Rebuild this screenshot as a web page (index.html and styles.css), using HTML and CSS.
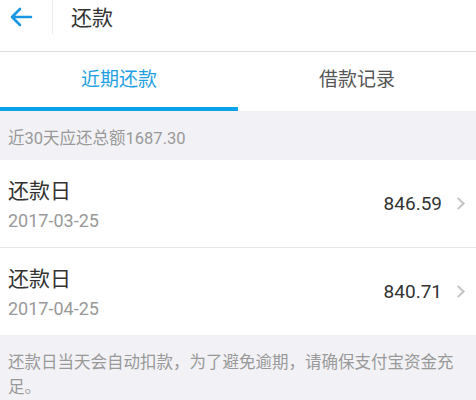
FILE: index.html
```
<!DOCTYPE html>
<html lang="zh-CN">
<head>
    <meta charset="UTF-8">
    <meta name="viewport" content="width=device-width, initial-scale=1.0">
    <title>还款</title>
    <link rel="stylesheet" href="styles.css">
</head>
<body>
    <div class="header">
        <div class="back">
            <svg width="24" height="20" viewBox="0 0 24 20">
                <path d="M22 10 H3 M11 2 L3 10 L11 18" fill="none" stroke="#1a96e2" stroke-width="2.6" stroke-linecap="round" stroke-linejoin="round"/>
            </svg>
        </div>
        <div class="title">还款</div>
    </div>
    <div class="tabs">
        <div class="tab active">近期还款</div>
        <div class="tab">借款记录</div>
    </div>
    <div class="summary">近30天应还总额1687.30</div>
    <div class="list">
        <div class="row">
            <div class="info">
                <div class="name">还款日</div>
                <div class="date">2017-03-25</div>
            </div>
            <div class="amount">846.59</div>
            <span class="arrow"></span>
        </div>
        <div class="row">
            <div class="info">
                <div class="name">还款日</div>
                <div class="date">2017-04-25</div>
            </div>
            <div class="amount">840.71</div>
            <span class="arrow"></span>
        </div>
    </div>
    <div class="note">还款日当天会自动扣款，为了避免逾期，请确保支付宝资金充足。</div>
</body>
</html>
```

FILE: styles.css
```
body {
    margin: 0;
    font-family: Roboto, "Noto Sans CJK SC", sans-serif;
    background-color: #f2f2f6;
    color: #333;
}
.header {
    display: flex;
    align-items: flex-start;
    height: 51px;
    background-color: #fff;
    border-bottom: 1px solid #dedede;
}
.back {
    width: 53px;
    height: 34px;
    display: flex;
    align-items: center;
    padding-left: 9px;
    box-sizing: border-box;
    border-right: 1px solid #ececec;
}
.title {
    margin-left: 18px;
    font-size: 21px;
    line-height: 36px;
    color: #333;
}
.tabs {
    display: flex;
    background-color: #fff;
}
.tab {
    flex: 1;
    height: 55px;
    line-height: 56px;
    text-align: center;
    font-size: 19px;
    color: #555;
    border-bottom: 4px solid transparent;
}
.tab.active {
    color: #1ea0e2;
    border-bottom-color: #0aa2e8;
}
.summary {
    height: 46px;
    line-height: 50px;
    padding: 3px 8px 0;
    font-size: 16.5px;
    color: #999;
}
.list {
    background-color: #fff;
}
.row {
    display: flex;
    align-items: center;
    height: 87px;
    padding: 0 9px 0 8px;
    border-bottom: 1px solid #e6e6e6;
}
.row:last-child {
    border-bottom: none;
}
.info {
    flex: 1;
    padding-top: 6px;
}
.name {
    font-size: 21px;
    line-height: 28px;
    color: #333;
}
.date {
    font-size: 18px;
    line-height: 32px;
    color: #999;
}
.amount {
    font-size: 19px;
    color: #333;
    margin-right: 12px;
}
.arrow {
    width: 7px;
    height: 7px;
    border-top: 2px solid #c4c4c4;
    border-right: 2px solid #c4c4c4;
    transform: rotate(45deg);
    margin-right: 4px;
}
.note {
    padding: 15px 8px 12px;
    font-size: 16.5px;
    line-height: 25px;
    color: #999;
}
```
